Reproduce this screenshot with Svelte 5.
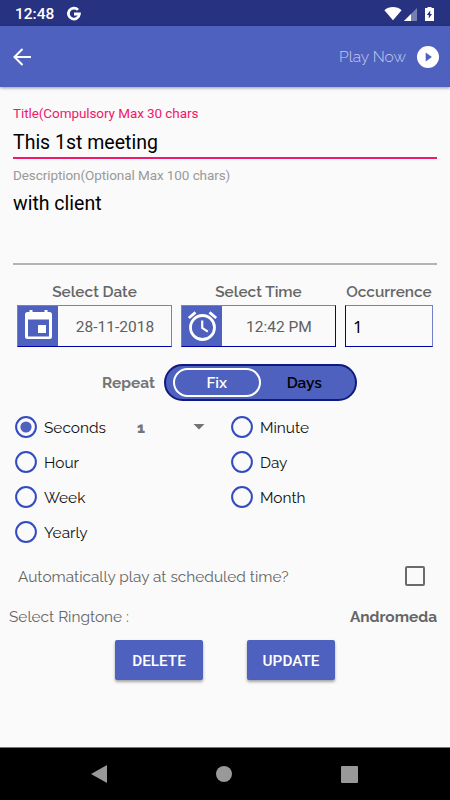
<script lang="ts">
  let repeatMode = $state('Fix');
  let interval = $state('Seconds');
  let autoPlay = $state(false);
  let title = $state('This 1st meeting');
  let description = $state('with client');
  const left = ['Seconds', 'Hour', 'Week', 'Yearly'];
  const right = ['Minute', 'Day', 'Month'];
</script>

{#snippet radio(name: string)}
  <button class="radio" role="radio" aria-checked={interval === name} onclick={() => (interval = name)}>
    <svg width="24" height="24" viewBox="0 0 24 24">
      <circle cx="12" cy="12" r="9.9" fill="none" stroke="#334bc0" stroke-width="2" />
      {#if interval === name}<circle cx="12" cy="12" r="5.6" fill="#4f61bf" />{/if}
    </svg>
    <span>{name}</span>
  </button>
{/snippet}

<div class="screen">
  <div class="status">
    <span class="clock">12:48</span>
    <svg class="google" width="16" height="16" viewBox="0 0 16 16">
      <path d="M12 3.9A5.5 5.5 0 1 0 13.4 8H8" fill="none" stroke="#fff" stroke-width="2.8" />
    </svg>
    <svg class="signals" width="52" height="16" viewBox="0 0 52 16">
      <path d="M.4 4.2C5-.1 13-.1 17.6 4.2L9 14.2Z" fill="#fff" />
      <path d="M33 2V15H20Z" fill="#777fb0" />
      <path d="M27 8V15H20Z" fill="#fff" />
      <path d="M41 2h2.5V1h4v1H50v13H41Z" fill="#fff" />
      <path d="M46.2 4.5 42.8 9h2v3.6L48 8h-1.8Z" fill="#273280" />
    </svg>
  </div>

  <header>
    <button class="back" aria-label="Back">
      <svg width="18" height="18" viewBox="0 0 18 18" fill="none" stroke="#fff" stroke-width="2">
        <path d="M18 9H1.5M9.5 1 1.5 9l8 8" />
      </svg>
    </button>
    <span class="play-label">Play Now</span>
    <svg width="22" height="22" viewBox="0 0 22 22">
      <circle cx="11" cy="11" r="11" fill="#fff" />
      <path d="M8.7 6.6v9l6.2-4.5Z" fill="#4f61bf" />
    </svg>
  </header>

  <main>
    <label class="field title">
      <span class="hint">Title(Compulsory Max 30 chars</span>
      <input bind:value={title} />
    </label>
    <label class="field desc">
      <span class="hint">Description(Optional Max 100 chars)</span>
      <textarea bind:value={description}></textarea>
    </label>

    <div class="pickers">
      <div class="picker">
        <span class="caption">Select Date</span>
        <div class="box">
          <div class="icon">
            <svg width="40" height="40" viewBox="0 0 40 40">
              <path d="M9.5 6h22A2.5 2.5 0 0 1 34 8.5v22a2.5 2.5 0 0 1-2.5 2.5h-22A2.5 2.5 0 0 1 7 30.5v-22A2.5 2.5 0 0 1 9.5 6ZM10 13.5V30.5H31V13.5Z" fill="#fff" fill-rule="evenodd" />
              <path d="M20 19h8v8h-8ZM11.5 4h3v4h-3ZM26.5 4h3v4h-3Z" fill="#fff" />
            </svg>
          </div>
          <span class="value">28-11-2018</span>
        </div>
      </div>
      <div class="picker">
        <span class="caption">Select Time</span>
        <div class="box time">
          <div class="icon">
            <svg width="40" height="40" viewBox="0 0 40 40" fill="none" stroke="#fff">
              <circle cx="20.5" cy="21.5" r="12" stroke-width="2.8" />
              <path d="M20.2 14.5v7.5l5.6 3.6" stroke-width="2.2" />
              <path d="m6.8 12 6.7-5.6M34.2 12l-6.7-5.6" stroke-width="2.8" />
            </svg>
          </div>
          <span class="value">12:42 PM</span>
        </div>
      </div>
      <div class="picker small">
        <span class="caption">Occurrence</span>
        <div class="box count">1</div>
      </div>
    </div>

    <div class="repeat">
      <span class="repeat-label">Repeat</span>
      <div class="toggle">
        {#each ['Fix', 'Days'] as mode}
          <button class:active={repeatMode === mode} onclick={() => (repeatMode = mode)}>{mode}</button>
        {/each}
      </div>
    </div>

    <div class="options" role="radiogroup">
      <div class="col">
        {#each left as name}{@render radio(name)}{/each}
      </div>
      <div class="spinner">
        <span>1</span>
        <svg width="12" height="6" viewBox="0 0 12 6"><path d="M.5 0h11L6 5.6Z" fill="#737373" /></svg>
      </div>
      <div class="col">
        {#each right as name}{@render radio(name)}{/each}
      </div>
    </div>

    <div class="auto">
      <span>Automatically play at scheduled time?</span>
      <button class="check" role="checkbox" aria-label="Automatically play" aria-checked={autoPlay} onclick={() => (autoPlay = !autoPlay)}>
        {#if autoPlay}<svg width="16" height="16" viewBox="0 0 16 16"><path d="m2 8 4 4 8-9" fill="none" stroke="#4f61bf" stroke-width="2" /></svg>{/if}
      </button>
    </div>

    <div class="ringtone">
      <span>Select Ringtone :</span>
      <strong>Andromeda</strong>
    </div>

    <div class="actions">
      <button>DELETE</button>
      <button>UPDATE</button>
    </div>
  </main>

  <nav>
    <svg width="16" height="18" viewBox="0 0 16 18"><path d="M0 9 16 0v18Z" fill="#999" /></svg>
    <svg width="16" height="16" viewBox="0 0 16 16"><circle cx="8" cy="8" r="8" fill="#999" /></svg>
    <svg width="17" height="17" viewBox="0 0 17 17"><rect width="17" height="17" rx="1" fill="#999" /></svg>
  </nav>
</div>

<style>
  :global(body) { background: #fafafa; }
  * { box-sizing: border-box; }
  svg { display: block; flex: none; }
  button { border: none; background: none; padding: 0; font: inherit; color: inherit; cursor: pointer; }
  span { white-space: nowrap; }

  .screen { width: 450px; height: 800px; display: flex; flex-direction: column; overflow: hidden; background: #fafafa; font-family: Raleway, Lato, sans-serif; font-size: 15.4px; color: #666; }

  .status { height: 26px; flex: none; background: #273280; display: flex; align-items: center; padding: 1px 14px 0 15px; color: #fff; font: 500 15.5px Roboto, sans-serif; }
  .clock { width: 39px; }
  .google { margin-left: 12px; }
  .signals { margin-left: auto; }

  header { height: 61px; flex: none; background: #4f61bf; display: flex; align-items: center; padding: 0 11px 0 13px; box-shadow: 0 1px 3px rgba(0, 0, 0, 0.4); }
  .play-label { margin-left: auto; margin-right: 11px; color: #c5cbea; font-size: 15.5px; font-weight: 300; }

  main { flex: 1; display: flex; flex-direction: column; padding-top: 17px; }
  .field { display: flex; flex-direction: column; margin: 0 13px; font-family: Roboto, sans-serif; }
  .hint { font-size: 13.5px; letter-spacing: -0.08px; line-height: 18px; color: #999; }
  .field input, .field textarea { border: none; outline: none; background: none; padding: 0; margin: 0; resize: none; overflow: hidden; font: 19.5px/28px Roboto, sans-serif; color: #000; }
  .title { height: 55px; border-bottom: 2px solid #f0186a; }
  .title .hint { color: #f0186a; }
  .title input { margin-top: 7px; height: 28px; }
  .desc { height: 106px; padding-top: 7px; border-bottom: 2px solid #b4b4b4; }
  .desc textarea { height: 60px; margin-top: 6px; }

  .pickers { display: flex; gap: 9px; padding: 17px 17px 0; }
  .picker { width: 155px; display: flex; flex-direction: column; align-items: center; }
  .picker.small { width: 88px; }
  .caption { line-height: 20px; height: 23px; font-weight: 600; color: #666; }
  .box { width: 100%; height: 42px; display: flex; align-items: center; border: 1px solid #7480cc; border-bottom-color: #0000a8; }
  .box.time { border-right-color: #0000a8; }
  .box.count { border-left-color: #0000a8; padding-left: 7px; font: 17px "Noto Sans", sans-serif; color: #000; }
  .icon { width: 40px; height: 40px; background: #4f61bf; }
  .value { flex: 1; padding: 1px 0 0 1px; text-align: center; font: 15.5px Roboto, sans-serif; color: #606060; }

  .repeat { display: flex; align-items: center; height: 37px; margin-top: 17px; padding-left: 102px; }
  .repeat-label { width: 62px; font-weight: 700; color: #757575; }
  .toggle { width: 193px; height: 37px; border: 2px solid #101a80; border-radius: 19px; background: #4f61bf; display: flex; align-items: center; padding: 0 7px; font-weight: 600; color: #000; }
  .toggle button { width: 88px; height: 29px; border: 2px solid transparent; border-radius: 15px; }
  .toggle .active { border-color: #fff; color: #fff; }

  .options { display: flex; align-items: flex-start; height: 140px; margin-top: 8.5px; padding-left: 14px; }
  .col { display: flex; flex-direction: column; }
  .col:first-child { width: 123px; }
  .radio { height: 35px; display: flex; align-items: center; gap: 6px; color: #111; }
  .radio span, .spinner span { padding-top: 1px; }
  .spinner { height: 35px; width: 93px; display: flex; align-items: center; font-weight: 800; color: #757575; }
  .spinner svg { margin-left: auto; margin-right: 25px; }

  .auto { height: 40px; margin-top: 6.5px; padding: 0 25px 0 18px; display: flex; align-items: center; justify-content: space-between; }
  .auto span, .ringtone span, .ringtone strong { padding-top: 1px; }
  .check { width: 20px; height: 20px; border: 2px solid #6a6a6a; border-radius: 2px; }
  .ringtone { height: 40px; padding: 0 13px 0 9px; display: flex; align-items: center; justify-content: space-between; }

  .actions { display: flex; gap: 44px; margin: 4px 0 0 115px; }
  .actions button { width: 88px; height: 40px; padding-top: 1px; border-radius: 2px; background: #4f61bf; color: #fff; font: 500 15.3px Roboto, sans-serif; box-shadow: 0 2px 3px rgba(0, 0, 0, 0.35); }

  nav { height: 53px; flex: none; border-top: 1px solid #777; background: #000; display: flex; align-items: center; justify-content: space-between; padding: 0 92px 0 91px; }
</style>
